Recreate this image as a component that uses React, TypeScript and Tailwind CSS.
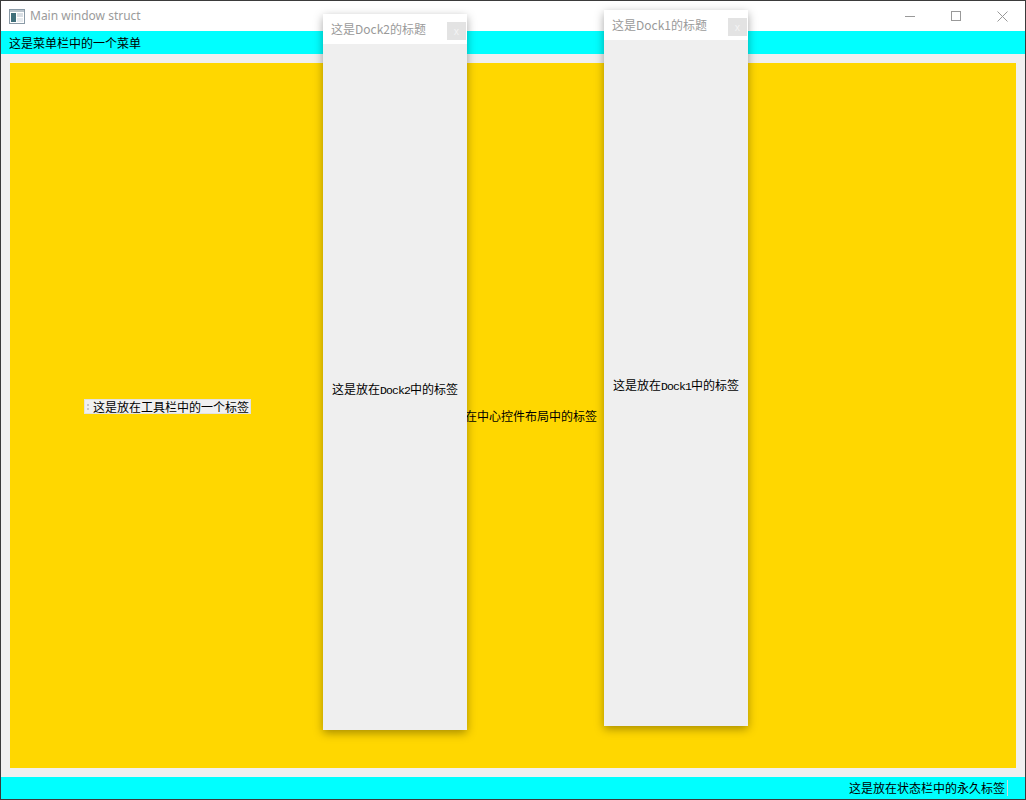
import React from "react";

const cjk = { fontFamily: '"Noto Sans CJK SC", "Noto Sans", sans-serif' };
const mono = { fontFamily: '"Liberation Mono", monospace' };
const ui = { fontFamily: '"Noto Sans", "Noto Sans CJK SC", sans-serif' };

function AppIcon() {
  return (
    <svg width="16" height="15" viewBox="0 0 16 15">
      <rect x="0.5" y="0.5" width="15" height="14" fill="#ffffff" stroke="#8a9aa6" />
      <rect x="1" y="1" width="14" height="2" fill="#b9c4cc" />
      <rect x="2" y="4" width="5" height="9" fill="#3f6f7a" />
      <rect x="8" y="4" width="6" height="4" fill="#d8dee3" />
      <rect x="8" y="9" width="6" height="4" fill="#e7ebee" />
    </svg>
  );
}

function DockWindow({
  title,
  name,
  className,
}: {
  title: string;
  name: string;
  className: string;
}) {
  return (
    <div
      className={`absolute flex w-[144px] h-[716px] flex-col bg-[#efefef] shadow-[0_3px_9px_rgba(0,0,0,0.35)] ${className}`}
    >
      <div className="relative flex h-[30px] shrink-0 items-center bg-white pl-2">
        <span className="text-[12px] leading-none text-[#9a9a9a]" style={cjk}>
          {title}
        </span>
        <div className="absolute right-[1px] top-[8px] flex h-[18px] w-[19px] items-center justify-center bg-[#e3e3e3]">
          <span className="text-[10px] leading-none text-[#f4f4f4]" style={ui}>
            x
          </span>
        </div>
      </div>
      <div className="flex flex-1 items-center justify-center pt-[5px]">
        <span className="flex items-baseline whitespace-nowrap text-[12px] leading-none text-black" style={cjk}>
          这是放在
          <span className="text-[11.5px] tracking-[-0.9px]" style={mono}>
            {name}
          </span>
          中的标签
        </span>
      </div>
    </div>
  );
}

export default function App() {
  return (
    <div className="relative flex h-[800px] w-[1026px] flex-col overflow-hidden border border-[#3b3b3b] bg-[#f0f0f0]">
      {/* title bar */}
      <div className="flex h-[30px] shrink-0 items-center bg-white">
        <div className="ml-[8px] mr-[5px] flex items-center pt-[1px]">
          <AppIcon />
        </div>
        <span className="text-[12px] leading-none text-[#9b9b9b]" style={ui}>
          Main window struct
        </span>
        <div className="ml-auto flex h-full">
          <div className="flex h-full w-[46px] items-center justify-center">
            <div className="h-px w-[10px] bg-[#999]" />
          </div>
          <div className="flex h-full w-[46px] items-center justify-center">
            <div className="h-[10px] w-[10px] border border-[#999]" />
          </div>
          <div className="flex h-full w-[46px] items-center justify-center">
            <svg width="11" height="11" viewBox="0 0 11 11">
              <path d="M0.5 0.5 L10.5 10.5 M10.5 0.5 L0.5 10.5" stroke="#999" strokeWidth="1" />
            </svg>
          </div>
        </div>
      </div>

      {/* menu bar */}
      <div className="flex h-[23px] shrink-0 items-center bg-[#00ffff] pl-[8px]">
        <span className="text-[12px] leading-none text-black" style={cjk}>
          这是菜单栏中的一个菜单
        </span>
      </div>

      {/* central widget */}
      <div className="flex flex-1 p-[9px]">
        <div className="relative flex flex-1 items-center justify-center bg-[#ffd700]">
          <div className="absolute left-[74px] top-[336px] flex h-[15px] items-center border border-[#e2e2e2] bg-[#f0f0f0] pr-[1px]">
            <div className="mx-[2px] flex flex-col gap-[2px]">
              <div className="h-[2px] w-[2px] bg-[#c8c8c8]" />
              <div className="h-[2px] w-[2px] bg-[#c8c8c8]" />
            </div>
            <span className="ml-[2px] text-[12px] leading-none text-black" style={cjk}>
              这是放在工具栏中的一个标签
            </span>
          </div>
          <span className="text-[12px] leading-none text-black" style={cjk}>
            这是放在中心控件布局中的标签
          </span>
        </div>
      </div>

      {/* status bar */}
      <div className="flex h-[22px] shrink-0 items-center justify-end bg-[#00ffff] pr-[17px]">
        <span className="text-[12px] leading-none text-black" style={cjk}>
          这是放在状态栏中的永久标签
        </span>
        <div className="ml-[2px] h-[16px] w-px bg-[#d6d6d6]" />
      </div>

      <DockWindow title="这是Dock2的标题" name="Dock2" className="left-[322px] top-[13px]" />
      <DockWindow title="这是Dock1的标题" name="Dock1" className="left-[603px] top-[9px]" />
    </div>
  );
}
